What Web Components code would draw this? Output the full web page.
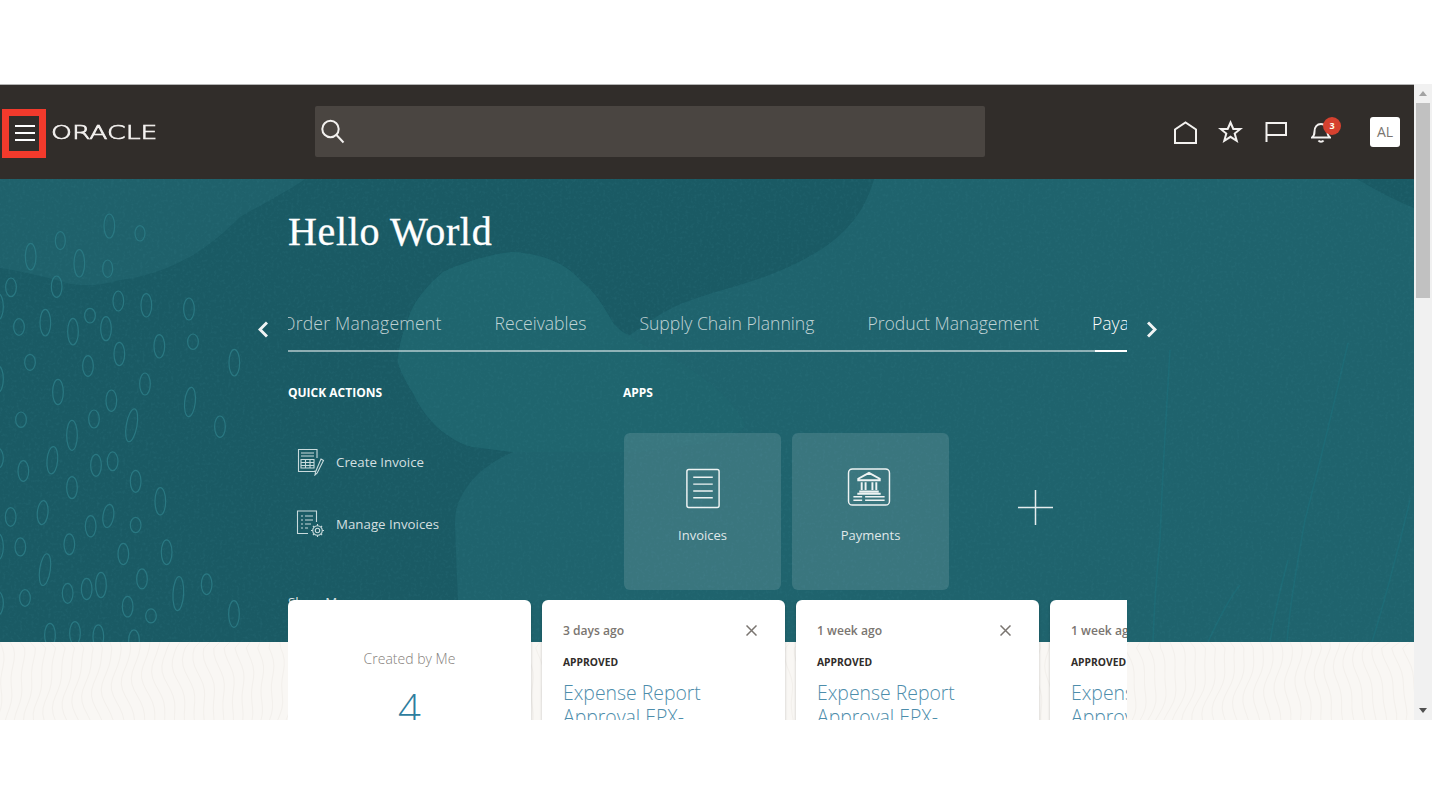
<!DOCTYPE html>
<html lang="en">
<head>
<meta charset="utf-8">
<title>Oracle Home</title>
<style>
  html, body { margin: 0; padding: 0; height: 805px; overflow: hidden; background: #fff; }
  body { font-family: "Open Sans", "Liberation Sans", sans-serif; }
</style>
</head>
<body>
<app-frame>
  <app-header></app-header>
  <home-page>
    <page-hero slot="hero">
      <h1 slot="title">Hello World</h1>
      <nav-strip slot="nav" active="Payables" items="Order Management,Receivables,Supply Chain Planning,Product Management,Payables"></nav-strip>
      <quick-action slot="quick" icon="create" label="Create Invoice"></quick-action>
      <quick-action slot="quick" icon="manage" label="Manage Invoices"></quick-action>
      <app-tile slot="apps" icon="invoices" label="Invoices"></app-tile>
      <app-tile slot="apps" icon="payments" label="Payments"></app-tile>
    </page-hero>
    <summary-card slot="cards" label="Created by Me" count="4"></summary-card>
    <notif-card slot="cards" age="3 days ago"></notif-card>
    <notif-card slot="cards" age="1 week ago"></notif-card>
    <notif-card slot="cards" age="1 week ago"></notif-card>
  </home-page>
</app-frame>

<script>
class AppFrame extends HTMLElement {
    constructor() {
        super();
        this.attachShadow({ mode: "open" });
    }

    connectedCallback() {
        this.shadowRoot.innerHTML = `
        <style>
            :host { display: flex; margin-top: 84px; height: 636px; width: 1432px; overflow: hidden; }
            .view { width: 1414px; height: 636px; display: flex; flex-direction: column; overflow: hidden; }
            .bar { width: 18px; height: 636px; background: #f1f1f1; display: flex; flex-direction: column; align-items: center; }
            .up { margin-top: 7px; border: 4px solid transparent; border-top: 0; border-bottom: 5px solid #a3a3a3; }
            .thumb { width: 14px; height: 195px; margin-top: 7px; background: #c1c1c1; }
            .down { margin-top: auto; margin-bottom: 7px; border: 4px solid transparent; border-bottom: 0; border-top: 5px solid #505050; }
        </style>
        <div class="view"><slot></slot></div>
        <div class="bar"><i class="up"></i><i class="thumb"></i><i class="down"></i></div>
      `;
    }
}
customElements.define("app-frame", AppFrame);

class AppHeader extends HTMLElement {
    constructor() {
        super();
        this.attachShadow({ mode: "open" });
    }

    connectedCallback() {
        const styles = `
            :host { display: flex; flex: none; align-items: center; box-sizing: border-box; height: 95px; padding: 0 14px 0 2px; background: #312d2a; border-top: 1px solid #b4b4b4; color: #fff; }
            .burger { box-sizing: border-box; width: 44px; height: 49px; margin-top: 3px; border: 7px solid #f23a2c; display: flex; flex-direction: column; justify-content: center; gap: 5px; padding: 0 0 2px 6px; }
            .burger i { display: block; width: 20px; height: 2px; background: #fff; }
            .logo { width: 264px; margin-left: 5px; margin-top: 1px; box-sizing: border-box; font: 200 19px/1 "DejaVu Sans", sans-serif; color: #f4f2f0; }
            .logo span { display: inline-block; transform: scaleX(1.4); transform-origin: left center; -webkit-text-stroke: .7px #f4f2f0; }
            .search { width: 670px; height: 51px; margin-top: -1px; background: #4a4541; border-radius: 2px; display: flex; align-items: center; padding-left: 6px; box-sizing: border-box; }
            .icons { margin-left: auto; display: flex; align-items: center; }
            .ico { position: relative; width: 45px; display: flex; justify-content: center; }
            svg { display: block; fill: none; stroke: #f3f1ef; stroke-width: 2; }
            .badge { position: absolute; left: 25px; top: -5px; width: 18px; height: 18px; border-radius: 50%; background: #d5412f; color: #ffe; font: 700 9px/18px "Open Sans", sans-serif; text-align: center; }
            .me { margin-left: 27px; width: 30px; height: 30px; border-radius: 3px; background: #fff; color: #7a7570; font: 500 14px/30px "Open Sans", sans-serif; text-align: center; }
      `;

        const template = `
            <div class="burger"><i></i><i></i><i></i></div>
            <div class="logo"><span>ORACLE</span></div>
            <div class="search">
                <svg width="24" height="25" viewBox="0 0 24 25"><circle cx="9.5" cy="10" r="8.2"/><path d="M15.5 16l7 7.5"/></svg>
            </div>
            <div class="icons">
                <div class="ico"><svg width="25" height="23" viewBox="0 0 25 23"><path d="M2 22V8.5L12.5 1.5 23 8.5V22Z"/></svg></div>
                <div class="ico"><svg width="25" height="24" viewBox="0 0 25 24"><path d="M12.5 2.500l2.800 6.500h7l-5.600 4.600 2 7.200-6.200-4-6.200 4 2-7.200L2.700 9h7Z"/></svg></div>
                <div class="ico"><svg width="22" height="22" viewBox="0 0 22 22"><path d="M1.500 21V2H21V14H1.500"/></svg></div>
                <div class="ico"><svg width="20" height="21" viewBox="0 0 20 21"><path d="M1 15.500c2-1.500 2.500-3 2.500-6C3.500 5 6 2 10 2s6.500 3 6.500 7.500c0 3 .5 4.500 2.500 6ZM7.500 18.500c1 1.500 4 1.500 5 0"/></svg><span class="badge">3</span></div>
            </div>
            <div class="me">AL</div>
      `;

        this.shadowRoot.innerHTML = `
        <style>${styles}</style>
        ${template}
      `;
    }
}
customElements.define("app-header", AppHeader);

class HomePage extends HTMLElement {
    constructor() {
        super();
        this.attachShadow({ mode: "open" });
    }

    connectedCallback() {
        // contour lines of the pale band under the hero
        let lines = "";
        for (let x = -10; x < 1420; x += 10) {
            let d = `M${x} 0`;
            const amp = 3 + 4 * Math.abs(Math.sin(x / 83));
            for (let y = 6; y <= 84; y += 6) {
                const dx = amp * Math.sin(y / 19 + x / 47) + 2 * Math.sin(y / 8 + x / 23);
                d += ` L${(x + dx).toFixed(1)} ${y}`;
            }
            lines += `<path d="${d}"/>`;
        }

        this.shadowRoot.innerHTML = `
        <style>
            :host { display: block; position: relative; flex: 1; overflow: hidden; background: #f9f7f4; }
            .band { position: absolute; left: 0; top: 463px; width: 1414px; height: 78px; fill: none; stroke: #f3f0ec; stroke-width: 1; }
            .cards { position: relative; display: flex; gap: 11px; width: 839px; height: 130px; margin: -42px 0 0 288px; overflow: hidden; }
            ::slotted([slot="cards"]) { flex: none; }
        </style>
        <svg class="band" viewBox="0 0 1414 78">${lines}</svg>
        <slot name="hero"></slot>
        <div class="cards"><slot name="cards"></slot></div>
      `;
    }
}
customElements.define("home-page", HomePage);

class PageHero extends HTMLElement {
    constructor() {
        super();
        this.attachShadow({ mode: "open" });
    }

    backdrop() {
        // ovals on the left, measured in 3x crop coordinates
        const pills = [[328,138,32,72],[420,160,30,46],[181,182,30,54],[92,230,32,80],[238,250,32,82],[323,266,30,52],[33,322,32,56],[170,320,32,64],[355,363,32,60],[439,376,32,70],[567,387,32,66],[57,441,32,50],[136,428,32,80],[219,455,32,80],[270,407,32,44],[318,446,32,72],[358,522,32,70],[478,499,32,70],[579,485,32,46],[703,548,32,80],[90,547,32,48],[264,558,32,62],[174,636,32,76],[435,612,32,66],[334,662,32,64],[570,666,32,88,6],[395,736,32,100,10],[63,719,32,46],[282,717,32,54],[216,766,32,90],[660,740,32,64],[157,841,32,82,5],[70,873,32,62],[288,856,32,66],[338,844,32,56],[216,923,32,66],[407,904,32,66],[481,964,32,82],[128,998,32,72,5],[32,1011,32,56],[325,1008,32,70,8],[272,1039,32,64],[407,1035,32,46],[208,1093,32,62],[61,1101,32,54],[370,1122,32,64],[500,1117,32,74],[135,1169,32,96,8],[303,1215,32,76],[426,1197,32,60],[260,1227,32,64],[203,1240,32,60],[75,1254,32,50],[383,1280,32,62],[535,1241,32,102,3],[620,1213,32,62],[453,1308,32,42],[702,1302,32,80],[150,1365,32,70],[225,1360,32,70],[295,1370,32,70],[402,1380,32,60],[-6,380,32,80],[-6,597,32,80],[-6,835,32,60],[-6,1100,32,80],[-6,1270,32,70]];
        const ovals = pills.map(([cx, cy, w, h, r]) =>
            `<ellipse cx="${cx}" cy="${cy}" rx="${w / 2}" ry="${h / 2}"${r ? ` transform="rotate(${r} ${cx} ${cy})"` : ""}/>`).join("");

        return `
        <svg class="backdrop" viewBox="0 179 1414 463" preserveAspectRatio="none">
            <defs>
                <filter id="grain" x="0" y="0" width="100%" height="100%">
                    <feTurbulence type="fractalNoise" baseFrequency="0.35" numOctaves="2" seed="4"/>
                    <feColorMatrix values="0 0 0 0 .05  0 0 0 0 .25  0 0 0 0 .3  0 0 0 -2.4 1.25"/>
                </filter>
            </defs>
            <rect x="0" y="179" width="1414" height="463" fill="#1a5a64"/>
            <path fill="#1f616b" d="M0 179H305C290 190 270 200 240 217C225 232 210 245 190 257C165 270 145 277 120 280C100 286 85 286 70 284C50 278 25 272 0 268Z"/>
            <path fill="#1f636d" d="M874 179C868 200 858 218 843 232C825 250 800 262 777 272C745 285 710 292 683 303C660 312 645 325 630 335C622 333 617 328 613 323C603 305 595 292 580 280C565 262 540 254 513 252C490 254 465 262 443 272C428 285 420 295 413 307C405 325 398 345 398 363C402 375 408 385 413 393C420 408 428 418 437 427C450 438 460 444 473 447L513 452C490 462 475 475 467 487C458 500 455 510 455 523C456 560 458 600 460 642H1414V179Z"/>
            <path fill="#1f6870" opacity=".6" d="M513 252C540 254 565 262 580 280C595 292 603 305 613 323C622 333 640 345 660 352C700 372 735 400 745 425C740 440 690 446 640 452L513 452L473 447C460 444 450 438 437 427C428 418 420 408 413 393C408 385 402 375 398 363C398 345 405 325 413 307C420 295 428 285 443 272C465 262 490 254 513 252Z"/>
            <path fill="#1a5a64" d="M1357 179H1414V208C1395 200 1375 190 1357 179Z"/>
            <g fill="none" stroke="#1d6e79" stroke-width="1.500" opacity=".7">
                <path d="M1348 343C1335 400 1318 470 1305 520C1298 560 1290 600 1287 642"/>
                <path d="M1170 350C1166 420 1162 480 1160 540C1156 580 1154 610 1153 642"/>
                <path d="M1410 500C1398 550 1385 600 1372 642"/>
                <path d="M1240 585C1228 600 1218 620 1208 642"/>
                <path d="M1288 560C1280 590 1274 615 1270 642"/>
            </g>
            <rect x="0" y="179" width="1414" height="463" filter="url(#grain)" opacity=".16"/>
            <g fill="none" stroke="#2a7882" stroke-width="3.600" transform="translate(0 180) scale(.3333)">${ovals}</g>
        </svg>`;
    }

    connectedCallback() {
        const styles = `
            :host { display: block; position: relative; flex: none; height: 463px; overflow: hidden; color: #fff; }
            .backdrop { position: absolute; inset: 0; width: 1414px; height: 463px; }
            .body { position: relative; display: flex; flex-direction: column; padding-top: 30px; }
            .title { padding-left: 288px; height: 46px; }
            ::slotted(h1) { margin: 0; font: 400 40px/46px "Liberation Serif", serif; letter-spacing: .65px; -webkit-text-stroke: .3px #fff; color: #fff; }
            .nav { margin-top: 56px; }
            .cols { display: grid; grid-template-columns: 335px auto; margin: 33px 0 0 288px; }
            h2 { margin: 0; font: 700 12px/16px "Open Sans", sans-serif; color: #fff; }
            .quick { margin-top: 30px; display: flex; flex-direction: column; }
            .more { margin-top: 37px; font: 400 13.300px/20px "Open Sans", sans-serif; color: rgba(255,255,255,.85); }
            .apps { margin: 32px 0 0 1px; display: flex; gap: 11px; align-items: center; }
            .plus { margin: -8px 0 0 58px; display: block; stroke: #e4eced; stroke-width: 1.500; }
      `;

        const template = `
            ${this.backdrop()}
            <div class="body">
                <div class="title"><slot name="title"></slot></div>
                <div class="nav"><slot name="nav"></slot></div>
                <div class="cols">
                    <div>
                        <h2>QUICK ACTIONS</h2>
                        <div class="quick"><slot name="quick"></slot></div>
                        <div class="more">Show More</div>
                    </div>
                    <div>
                        <h2>APPS</h2>
                        <div class="apps">
                            <slot name="apps"></slot>
                            <svg class="plus" width="35" height="35" viewBox="0 0 35 35"><path d="M17.500 0V35M0 17.500H35"/></svg>
                        </div>
                    </div>
                </div>
            </div>
      `;

        this.shadowRoot.innerHTML = `
        <style>${styles}</style>
        ${template}
      `;
    }
}
customElements.define("page-hero", PageHero);

class NavStrip extends HTMLElement {
    constructor() {
        super();
        this.attachShadow({ mode: "open" });
    }

    connectedCallback() {
        const items = this.getAttribute("items").split(",");
        const active = this.getAttribute("active");
        const tabs = items.map(t => `<a class="${t === active ? "on" : ""}">${t}</a>`).join("");

        this.shadowRoot.innerHTML = `
        <style>
            :host { display: flex; align-items: center; gap: 20px; padding-left: 258px; }
            svg { flex: none; display: block; margin-top: -5px; fill: none; stroke: #f1f4f4; stroke-width: 3; }
            .clip { width: 839px; overflow: hidden; box-shadow: inset 0 -2px rgba(255,255,255,.5); }
            .list { display: flex; gap: 53px; margin-left: -6px; width: max-content; }
            a { display: block; position: relative; padding-bottom: 17px; font: 300 17.600px/24px "Open Sans", sans-serif; color: rgba(255,255,255,.72); white-space: nowrap; }
            a:first-child { letter-spacing: .2px; }
            a.on { color: #fff; }
            a.on::after { content: ""; position: absolute; left: 3px; right: 0; bottom: 0; height: 2px; background: #fff; }
        </style>
        <svg width="10" height="17" viewBox="0 0 10 17"><path d="M9 1.500L2 8.500l7 7"/></svg>
        <div class="clip"><div class="list">${tabs}</div></div>
        <svg width="10" height="17" viewBox="0 0 10 17"><path d="M1 1.500l7 7-7 7"/></svg>
      `;
    }
}
customElements.define("nav-strip", NavStrip);

const QUICK_ICONS = {
    create: `<svg width="30" height="28" viewBox="0 0 30 28">
        <path d="M19 22.500v1H2.500V1.500H21V10"/><path d="M5 5h13M5 8h13" /><path d="M5 11.500h13v8.500H5zM5 14.500h13M5 17.500h13M9.500 11.500V20M14 11.500V20"/>
        <path d="M19.500 24l-.5 3 2.200-2L27.500 12.500l-2.500-1.500Z"/></svg>`,
    manage: `<svg width="30" height="28" viewBox="0 0 30 28">
        <path d="M12 23.500H1.500V1H20.500V12"/><path d="M5 6h2M9 6h8M5 10h2M9 10h8M5 14h2M9 14h6M5 18h2M9 18h3"/>
        <circle cx="21.500" cy="20.500" r="2.200"/><circle cx="21.500" cy="20.500" r="4.800"/>
        <path d="M21.500 14v1.700M21.500 25.300V27M15 20.500h1.700M26.300 20.500H28M16.900 15.900l1.200 1.200M24.900 23.900l1.200 1.200M16.900 25.100l1.200-1.200M24.900 17.100l1.200-1.200"/></svg>`
};

class QuickAction extends HTMLElement {
    constructor() {
        super();
        this.attachShadow({ mode: "open" });
    }

    connectedCallback() {
        this.shadowRoot.innerHTML = `
        <style>
            :host { display: flex; align-items: center; height: 62px; padding-left: 8px; gap: 10px; font: 400 13.300px/20px "Open Sans", sans-serif; color: rgba(255,255,255,.82); }
            svg { display: block; fill: none; stroke: #c8dadc; stroke-width: 1.100; }
        </style>
        ${QUICK_ICONS[this.getAttribute("icon")]}
        <span>${this.getAttribute("label")}</span>
      `;
    }
}
customElements.define("quick-action", QuickAction);

const TILE_ICONS = {
    invoices: `<svg width="36" height="41" viewBox="0 0 36 42">
        <rect x="1.500" y="1.500" width="33" height="39" rx="2"/><path d="M8 9.500H28M8 16.500H28M8 23.500H28M8 30.500H28"/></svg>`,
    payments: `<svg style="margin-left:-3px" width="44" height="39" viewBox="0 0 44 40">
        <rect x="1" y="1" width="42" height="37" rx="4"/>
        <path d="M22 5l-11 6v1.500h22V11ZM14.500 14.500v8M18.500 14.500v8M25.500 14.500v8M29.500 14.500v8M12 24h20M10 26.500h24" stroke-width="2"/>
        <path d="M6 29.500h9M18 29.500h20M6 33h9M18 33h20" stroke-width="1.600"/></svg>`
};

class AppTile extends HTMLElement {
    constructor() {
        super();
        this.attachShadow({ mode: "open" });
    }

    connectedCallback() {
        this.shadowRoot.innerHTML = `
        <style>
            :host { display: flex; flex-direction: column; align-items: center; box-sizing: border-box; width: 157px; height: 157px; padding-top: 35px; border-radius: 6px; background: rgba(255,255,255,.12); font: 400 13px/20px "Open Sans", sans-serif; color: rgba(255,255,255,.85); }
            .i { height: 42px; }
            svg { display: block; fill: none; stroke: #eef3f3; stroke-width: 1.500; }
            span { margin-top: 15px; }
        </style>
        <div class="i">${TILE_ICONS[this.getAttribute("icon")]}</div>
        <span>${this.getAttribute("label")}</span>
      `;
    }
}
customElements.define("app-tile", AppTile);

class SummaryCard extends HTMLElement {
    constructor() {
        super();
        this.attachShadow({ mode: "open" });
    }

    connectedCallback() {
        this.shadowRoot.innerHTML = `
        <style>
            :host { display: block; box-sizing: border-box; width: 243px; height: 200px; padding-top: 49px; border-radius: 6px 6px 0 0; background: #fff; text-align: center; box-shadow: 0 1px 3px rgba(0,0,0,.2); }
            p { margin: 0; font: 300 14px/20px "Open Sans", sans-serif; color: #85807b; }
            b { display: block; margin-top: 11px; font: 300 40px/56px "Open Sans", sans-serif; color: #2e7d9e; }
        </style>
        <p>${this.getAttribute("label")}</p>
        <b>${this.getAttribute("count")}</b>
      `;
    }
}
customElements.define("summary-card", SummaryCard);

class NotifCard extends HTMLElement {
    constructor() {
        super();
        this.attachShadow({ mode: "open" });
    }

    connectedCallback() {
        this.shadowRoot.innerHTML = `
        <style>
            :host { display: block; box-sizing: border-box; width: 243px; height: 200px; padding: 22px 0 0 21px; border-radius: 6px 6px 0 0; background: #fff; box-shadow: 0 1px 3px rgba(0,0,0,.2); }
            .top { display: flex; align-items: center; justify-content: space-between; padding-right: 28px; font: 600 12.100px/18px "Open Sans", sans-serif; color: #7a7570; }
            svg { display: block; margin-top: -2px; stroke: #7a7570; stroke-width: 1.500; }
            .state { margin-top: 14px; font: 700 10.300px/16px "Open Sans", sans-serif; color: #312d2a; }
            .name { margin-top: 11px; width: 190px; font: 300 19.400px/24px "Open Sans", sans-serif; color: #4d8dab; }
        </style>
        <div class="top"><span>${this.getAttribute("age")}</span>
            <svg width="11" height="11" viewBox="0 0 11 11"><path d="M.5.500l10 10M10.500.500l-10 10"/></svg></div>
        <div class="state">APPROVED</div>
        <div class="name">Expense Report Approval EPX-</div>
      `;
    }
}
customElements.define("notif-card", NotifCard);
</script>
</body>
</html>
